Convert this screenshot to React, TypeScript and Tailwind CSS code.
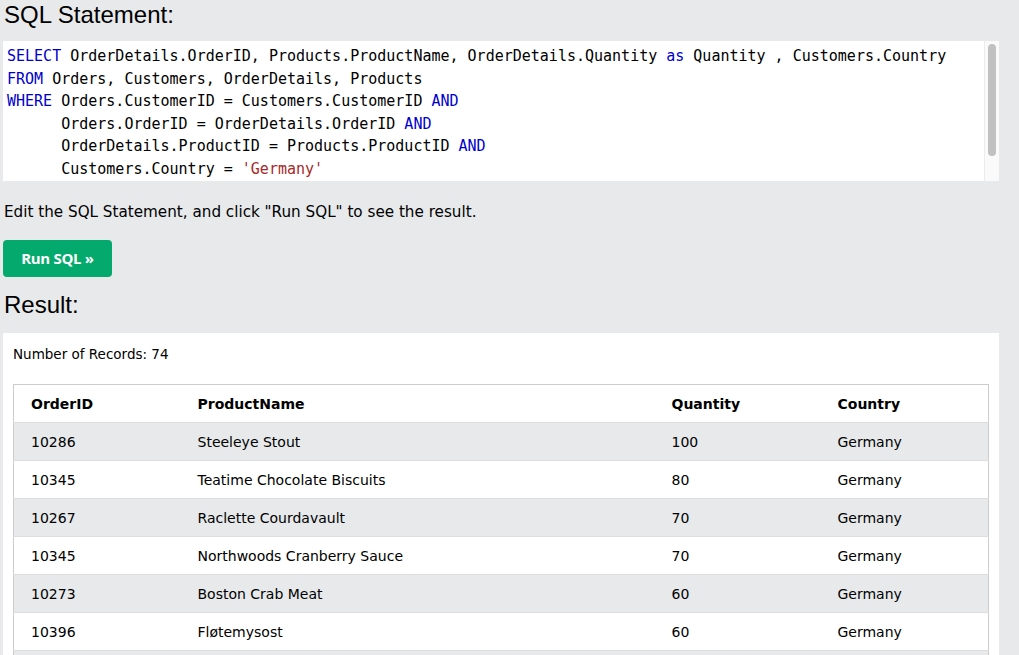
import React from 'react';

const rows = [
  ['10286', 'Steeleye Stout', '100', 'Germany'],
  ['10345', 'Teatime Chocolate Biscuits', '80', 'Germany'],
  ['10267', 'Raclette Courdavault', '70', 'Germany'],
  ['10345', 'Northwoods Cranberry Sauce', '70', 'Germany'],
  ['10273', 'Boston Crab Meat', '60', 'Germany'],
  ['10396', 'Fløtemysost', '60', 'Germany'],
];

const kw = 'text-[#0000cd]';

export default function App() {
  return (
    <div className="h-[655px] w-[1019px] overflow-hidden bg-[#e7e9eb] pl-[3px] pr-[20px] font-['DejaVu_Sans',sans-serif] text-black">
      <h2 className="pt-[1px] font-['Liberation_Sans',Arial,sans-serif] text-[24px] leading-[28px] pl-[1px]">SQL Statement:</h2>

      {/* editor */}
      <div className="relative mt-[12px] h-[140px] bg-white">
        <pre className="pt-[4px] pl-[4px] font-['DejaVu_Sans_Mono',monospace] text-[15px] leading-[22.5px] text-black">
          <span className={kw}>SELECT</span> OrderDetails.OrderID, Products.ProductName, OrderDetails.Quantity <span className={kw}>as</span> Quantity , Customers.Country{'\n'}
          <span className={kw}>FROM</span> Orders, Customers, OrderDetails, Products{'\n'}
          <span className={kw}>WHERE</span> Orders.CustomerID = Customers.CustomerID <span className={kw}>AND</span>{'\n'}
          {'      '}Orders.OrderID = OrderDetails.OrderID <span className={kw}>AND</span>{'\n'}
          {'      '}OrderDetails.ProductID = Products.ProductID <span className={kw}>AND</span>{'\n'}
          {'      '}Customers.Country = <span className="text-[#a52a2a]">'Germany'</span>
        </pre>
        <div className="absolute right-0 top-0 h-full w-[15px] border-l border-[#ececec] bg-[#fafafa]">
          <div className="ml-[3px] mt-[3px] h-[112px] w-[8px] rounded-full bg-[#c1c1c1]" />
        </div>
      </div>

      <p className="mt-[21px] pl-[1px] text-[15.2px] leading-[20px]">Edit the SQL Statement, and click "Run SQL" to see the result.</p>

      <button className="mt-[18px] flex h-[37px] w-[109px] items-center justify-center rounded-[4px] bg-[#04aa6d] font-['Open_Sans',sans-serif] text-[15px] font-bold text-white tracking-[-0.3px]">
        Run SQL »
      </button>

      <h2 className="mt-[14px] pl-[1px] font-['Liberation_Sans',Arial,sans-serif] text-[24px] leading-[28px]">Result:</h2>

      {/* result panel */}
      <div className="mt-[14px] h-[400px] bg-white px-[10px] pt-[12px]">
        <div className="text-[13.5px] leading-[18px]">Number of Records: 74</div>
        <table className="mt-[21px] w-full border-collapse border border-[#ccc] text-[14px]">
          <thead>
            <tr className="h-[38px] bg-white">
              <th className="w-[167px] pl-[17px] pt-[2px] text-left font-bold">OrderID</th>
              <th className="w-[474px] pl-[17px] pt-[2px] text-left font-bold">ProductName</th>
              <th className="w-[166px] pl-[17px] pt-[2px] text-left font-bold">Quantity</th>
              <th className="pl-[17px] pt-[2px] text-left font-bold">Country</th>
            </tr>
          </thead>
          <tbody>
            {rows.map((r, i) => (
              <tr key={i} className={`h-[38px] border-t border-[#ddd] ${i % 2 === 0 ? 'bg-[#e7e9eb]' : 'bg-white'}`}>
                {r.map((c, j) => (
                  <td key={j} className="pl-[17px] pt-[2px] text-left">{c}</td>
                ))}
              </tr>
            ))}
            <tr className="h-[38px] border-t border-[#ddd] bg-[#e7e9eb]">
              <td colSpan={4} />
            </tr>
          </tbody>
        </table>
      </div>
    </div>
  );
}
